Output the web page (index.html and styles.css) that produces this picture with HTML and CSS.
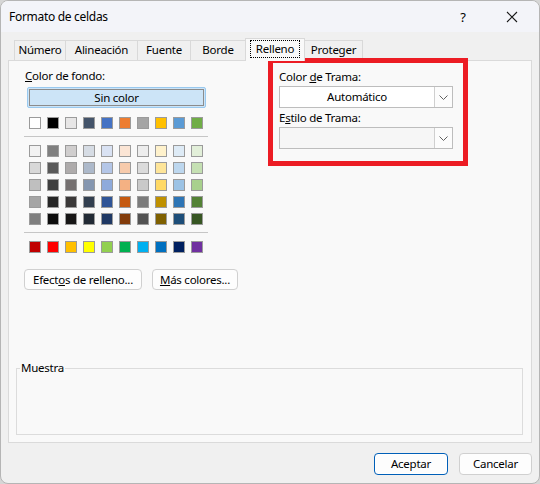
FILE: index.html
```html
<!DOCTYPE html>
<html lang="es">
<head>
<meta charset="utf-8">
<title>Formato de celdas</title>
<link rel="stylesheet" href="styles.css">
</head>
<body>
<div class="dialog">
  <div class="titlebar">
    <span class="title">Formato de celdas</span>
    <span class="help">?</span>
    <span class="close"><svg width="12" height="12" viewBox="0 0 12 12"><path d="M1 1L11 11M11 1L1 11" stroke="#1a1a1a" stroke-width="1.1" fill="none"/></svg></span>
  </div>
  <div class="body">
    <div class="tabs">
      <div class="tab w-num">Número</div>
      <div class="tab w-ali">Alineación</div>
      <div class="tab w-fue">Fuente</div>
      <div class="tab w-bor">Borde</div>
      <div class="tab w-rel active"><span class="focus">Relleno</span></div>
      <div class="tab w-pro">Proteger</div>
    </div>
    <div class="panel">
      <div class="cols">
        <div class="left">
          <div class="label"><u>C</u>olor de fondo:</div>
          <div class="nocolor"><span class="nocolor-inner">Sin color</span></div>
          <div class="swatch-row">
            <span class="sw" style="background:#ffffff"></span>
            <span class="sw" style="background:#000000"></span>
            <span class="sw" style="background:#e7e6e6"></span>
            <span class="sw" style="background:#44546a"></span>
            <span class="sw" style="background:#4472c4"></span>
            <span class="sw" style="background:#ed7d31"></span>
            <span class="sw" style="background:#a5a5a5"></span>
            <span class="sw" style="background:#ffc000"></span>
            <span class="sw" style="background:#5b9bd5"></span>
            <span class="sw" style="background:#70ad47"></span>
          </div>
          <div class="sep"></div>
          <div class="swatch-grid">
            <span class="sw" style="background:#f2f2f2"></span>
            <span class="sw" style="background:#7f7f7f"></span>
            <span class="sw" style="background:#d0cece"></span>
            <span class="sw" style="background:#d6dce4"></span>
            <span class="sw" style="background:#d9e2f3"></span>
            <span class="sw" style="background:#fbe5d5"></span>
            <span class="sw" style="background:#ededed"></span>
            <span class="sw" style="background:#fff2cc"></span>
            <span class="sw" style="background:#deebf6"></span>
            <span class="sw" style="background:#e2efd9"></span>

            <span class="sw" style="background:#d8d8d8"></span>
            <span class="sw" style="background:#595959"></span>
            <span class="sw" style="background:#aeabab"></span>
            <span class="sw" style="background:#adb9ca"></span>
            <span class="sw" style="background:#b4c6e7"></span>
            <span class="sw" style="background:#f7cbac"></span>
            <span class="sw" style="background:#dbdbdb"></span>
            <span class="sw" style="background:#fee599"></span>
            <span class="sw" style="background:#bdd7ee"></span>
            <span class="sw" style="background:#c5e0b3"></span>

            <span class="sw" style="background:#bfbfbf"></span>
            <span class="sw" style="background:#3f3f3f"></span>
            <span class="sw" style="background:#757070"></span>
            <span class="sw" style="background:#8496b0"></span>
            <span class="sw" style="background:#8eaadb"></span>
            <span class="sw" style="background:#f4b183"></span>
            <span class="sw" style="background:#c9c9c9"></span>
            <span class="sw" style="background:#ffd965"></span>
            <span class="sw" style="background:#9cc3e5"></span>
            <span class="sw" style="background:#a8d08d"></span>

            <span class="sw" style="background:#a5a5a5"></span>
            <span class="sw" style="background:#262626"></span>
            <span class="sw" style="background:#3a3838"></span>
            <span class="sw" style="background:#323f4f"></span>
            <span class="sw" style="background:#2f5496"></span>
            <span class="sw" style="background:#c55a11"></span>
            <span class="sw" style="background:#7b7b7b"></span>
            <span class="sw" style="background:#bf9000"></span>
            <span class="sw" style="background:#2e75b5"></span>
            <span class="sw" style="background:#538135"></span>

            <span class="sw" style="background:#7f7f7f"></span>
            <span class="sw" style="background:#0c0c0c"></span>
            <span class="sw" style="background:#171616"></span>
            <span class="sw" style="background:#222a35"></span>
            <span class="sw" style="background:#1f3864"></span>
            <span class="sw" style="background:#833c0b"></span>
            <span class="sw" style="background:#525252"></span>
            <span class="sw" style="background:#7f6000"></span>
            <span class="sw" style="background:#1e4e79"></span>
            <span class="sw" style="background:#375623"></span>
          </div>
          <div class="sep"></div>
          <div class="swatch-row std">
            <span class="sw" style="background:#c00000"></span>
            <span class="sw" style="background:#ff0000"></span>
            <span class="sw" style="background:#ffc000"></span>
            <span class="sw" style="background:#ffff00"></span>
            <span class="sw" style="background:#92d050"></span>
            <span class="sw" style="background:#00b050"></span>
            <span class="sw" style="background:#00b0f0"></span>
            <span class="sw" style="background:#0070c0"></span>
            <span class="sw" style="background:#002060"></span>
            <span class="sw" style="background:#7030a0"></span>
          </div>
          <div class="btn-row">
            <button class="btn w-efe">Efect<u>o</u>s de relleno...</button>
            <button class="btn w-mas"><u>M</u>ás colores...</button>
          </div>
        </div>
        <div class="right">
          <div class="label">Color <u>d</u>e Trama:</div>
          <div class="combo">
            <span class="value">Automático</span>
            <span class="arrow"><svg width="9" height="5" viewBox="0 0 9 5"><path d="M0.5 0.5L4.5 4.5L8.5 0.5" stroke="#606060" stroke-width="1" fill="none"/></svg></span>
          </div>
          <div class="label label2">E<u>s</u>tilo de Trama:</div>
          <div class="combo disabled">
            <span class="value"></span>
            <span class="arrow"><svg width="9" height="5" viewBox="0 0 9 5"><path d="M0.5 0.5L4.5 4.5L8.5 0.5" stroke="#606060" stroke-width="1" fill="none"/></svg></span>
          </div>
        </div>
      </div>
      <fieldset class="sample"><legend>Muestra</legend></fieldset>
    </div>
    <div class="footer">
      <button class="btn primary w-ace">Aceptar</button>
      <button class="btn w-can">Cancelar</button>
    </div>
  </div>
  <div class="highlight"></div>
</div>
</body>
</html>
```

FILE: styles.css
```css
* { box-sizing: border-box; }
html, body { margin: 0; padding: 0; }
body {
  width: 540px;
  height: 484px;
  overflow: hidden;
  background: #d6d6d6;
  font-family: "Noto Sans", "Open Sans", sans-serif;
  font-size: 11.5px;
  letter-spacing: -0.25px;
  color: #000;
}
.dialog {
  position: relative;
  width: 540px;
  height: 484px;
  background: #f0f0f0;
  border: 1px solid #b5b5b5;
  border-radius: 8px;
  overflow: hidden;
  display: flex;
  flex-direction: column;
}
.titlebar {
  height: 31px;
  flex: none;
  background: #f3f4f9;
  display: flex;
  align-items: center;
  padding-left: 8px;
}
.title { flex: 1; line-height: 16px; font-size: 12px; letter-spacing: -0.3px; }
.help { width: 20px; text-align: center; font-size: 13px; line-height: 16px; margin-right: 29px; letter-spacing: 0; }
.close { width: 20px; height: 16px; display: flex; align-items: center; justify-content: center; margin-right: 17px; }

.body {
  flex: 1;
  padding: 6px 7px 0 7px;
  display: flex;
  flex-direction: column;
}
.tabs {
  display: flex;
  height: 22px;
  padding-left: 6px;
  flex: none;
}
.tab {
  height: 20px;
  margin-top: 2px;
  margin-left: -1px;
  border: 1px solid #d9d9d9;
  border-bottom: none;
  background: #f0f0f0;
  text-align: center;
  line-height: 18px;
  white-space: nowrap;
}
.tab:first-child { margin-left: 0; }
.tab.active {
  position: relative;
  z-index: 2;
  margin-top: 0;
  height: 23px;
  background: #f9f9f9;
  padding-top: 1px;
}
.focus {
  display: inline-block;
  border: 1px dotted #000;
  line-height: 16px;
  padding: 0 5px;
}
.w-num { width: 52px; }
.w-ali { width: 73px; }
.w-fue { width: 54px; }
.w-bor { width: 56px; }
.w-rel { width: 60px; }
.w-pro { width: 59px; }

.panel {
  height: 383px;
  flex: none;
  background: #f9f9f9;
  border: 1px solid #dadada;
  display: flex;
  flex-direction: column;
}
.cols {
  display: flex;
  padding-left: 15px;
}
.left { width: 184px; flex: none; }
.right { width: 174px; flex: none; margin-left: 71px; }
.label {
  margin-top: 7px;
  line-height: 16px;
  padding-left: 1px;
  white-space: nowrap;
}
.right .label { margin-top: 8px; padding-left: 0; }
.right .label2 { margin-top: 2px; }
.nocolor {
  margin: 3px 2px 0 3px;
  height: 21px;
  border: 1px solid #99c9ef;
  border-radius: 2px;
  background: #cce4f7;
  padding: 1px;
}
.nocolor-inner {
  display: block;
  height: 100%;
  border: 1px solid #8c8c8c;
  text-align: center;
  line-height: 15px;
}
.swatch-row {
  display: flex;
  gap: 6px;
  padding-left: 5px;
  margin-top: 9px;
}
.swatch-row.std { margin-top: 8px; }
.sw {
  display: block;
  width: 12px;
  height: 12px;
  border: 1px solid #9b9b9b;
}
.sep {
  margin-top: 7px;
  height: 1px;
  background: #c6c6c6;
}
.swatch-grid {
  display: grid;
  grid-template-columns: repeat(10, 12px);
  column-gap: 6px;
  row-gap: 5px;
  padding-left: 5px;
  margin-top: 8px;
}
.btn-row {
  display: flex;
  gap: 10px;
  margin-top: 16px;
  width: 260px;
}
.btn {
  height: 21px;
  padding: 0;
  background: #fdfdfd;
  border: 1px solid #d0d0d0;
  border-radius: 4px;
  font-family: inherit;
  font-size: 11.5px;
  letter-spacing: -0.25px;
  color: #000;
  line-height: 18px;
  white-space: nowrap;
}
.w-efe { width: 118px; }
.w-mas { width: 86px; }

.combo {
  margin-top: 1px;
  height: 22px;
  display: flex;
  border: 1px solid #bdbdbd;
  background: #ffffff;
}
.combo.disabled { background: #f6f6f6; }
.combo .value {
  flex: 1;
  text-align: center;
  line-height: 20px;
}
.combo .arrow {
  width: 18px;
  border-left: 1px solid #cfcfcf;
  background: #fcfcfc;
  display: flex;
  align-items: center;
  justify-content: center;
}

.sample {
  margin: auto 8px 7px 7px;
  height: 75px;
  border: 1px solid #dcdcdc;
  padding: 0;
  min-width: 0;
}
.sample legend {
  margin-left: 3px;
  padding: 0 1px;
  line-height: 16px;
}

.footer {
  display: flex;
  justify-content: flex-end;
  gap: 11px;
  margin-top: 10px;
}
.footer .btn { height: 22px; }
.w-ace { width: 74px; }
.w-can { width: 73px; }
.primary {
  border: 1px solid #005fb8;
  box-shadow: inset 0 0 0 1px #ffffff;
}

.highlight {
  position: absolute;
  left: 267px;
  top: 57px;
  width: 200px;
  height: 108px;
  border: 5px solid #ec1c24;
  pointer-events: none;
}
```
